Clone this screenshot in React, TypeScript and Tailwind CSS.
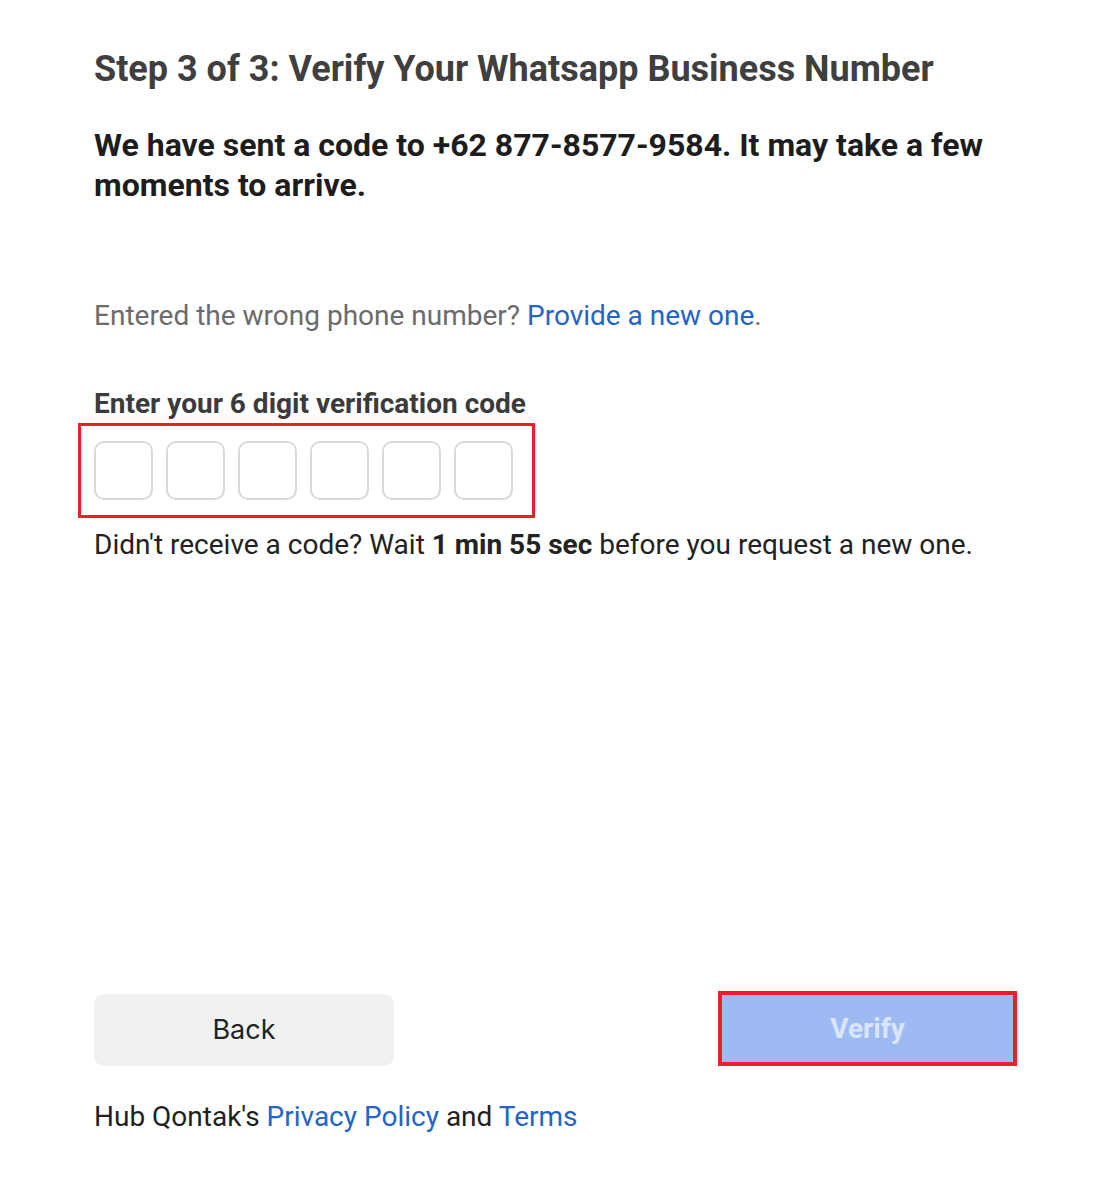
import React from 'react';

const font = { fontFamily: 'Roboto, "Liberation Sans", sans-serif' };

function OtpBox() {
  return (
    <input
      type="text"
      maxLength={1}
      className="h-[59px] w-[59px] rounded-[10px] border-2 border-[#d9d9d9] bg-white text-center text-2xl outline-none"
    />
  );
}

export default function App() {
  return (
    <div className="min-h-[1181px] w-full bg-white" style={font}>
      <div className="flex w-[1017px] flex-col pl-[94px] pt-[46px]">
        <h1 className="text-[36px] font-bold leading-[46px] text-[#3f3f3f]">
          Step 3 of 3: Verify Your Whatsapp Business Number
        </h1>
        <p className="mt-[33px] text-[32px] font-bold leading-[40px] text-[#1d1d1d]">
          We have sent a code to +62 877-8577-9584. It may take a few moments to arrive.
        </p>
        <p className="mt-[91px] text-[28px] leading-[40px] text-[#6b6b6b]">
          Entered the wrong phone number?{' '}
          <a className="text-[#2563c7]">Provide a new one</a>.
        </p>
        <p className="mt-[48px] text-[28px] font-bold leading-[40px] text-[#3b3b3b]">
          Enter your 6 digit verification code
        </p>
        <div className="-ml-[16px] -mt-[1px] w-[457px] border-[3px] border-[#e8202a] py-[15px] pl-[13px]">
          <div className="flex gap-[13px]">
            <OtpBox />
            <OtpBox />
            <OtpBox />
            <OtpBox />
            <OtpBox />
            <OtpBox />
          </div>
        </div>
        <p className="mt-[7px] text-[28px] leading-[40px] text-[#222222]">
          Didn't receive a code? Wait <span className="font-bold">1 min 55 sec</span> before you request a new one.
        </p>
        <div className="mt-[426px] flex items-end justify-between">
          <button
            className="h-[72px] w-[300px] rounded-[10px] bg-[#f1f1f1] text-[27px] text-[#222222]"
            style={{ fontFamily: 'Inter, "Liberation Sans", sans-serif' }}
          >
            Back
          </button>
          <div className="border-[4px] border-[#e8202a]">
            <button className="h-[67px] w-[291px] bg-[#9dbbf2] text-[28px] font-bold text-[#dae5fb]">
              Verify
            </button>
          </div>
        </div>
        <p className="mt-[31px] text-[28px] leading-[40px] text-[#1f1f1f]">
          Hub Qontak's <a className="text-[#2563c7]">Privacy Policy</a> and{' '}
          <a className="text-[#2563c7]">Terms</a>
        </p>
      </div>
    </div>
  );
}
